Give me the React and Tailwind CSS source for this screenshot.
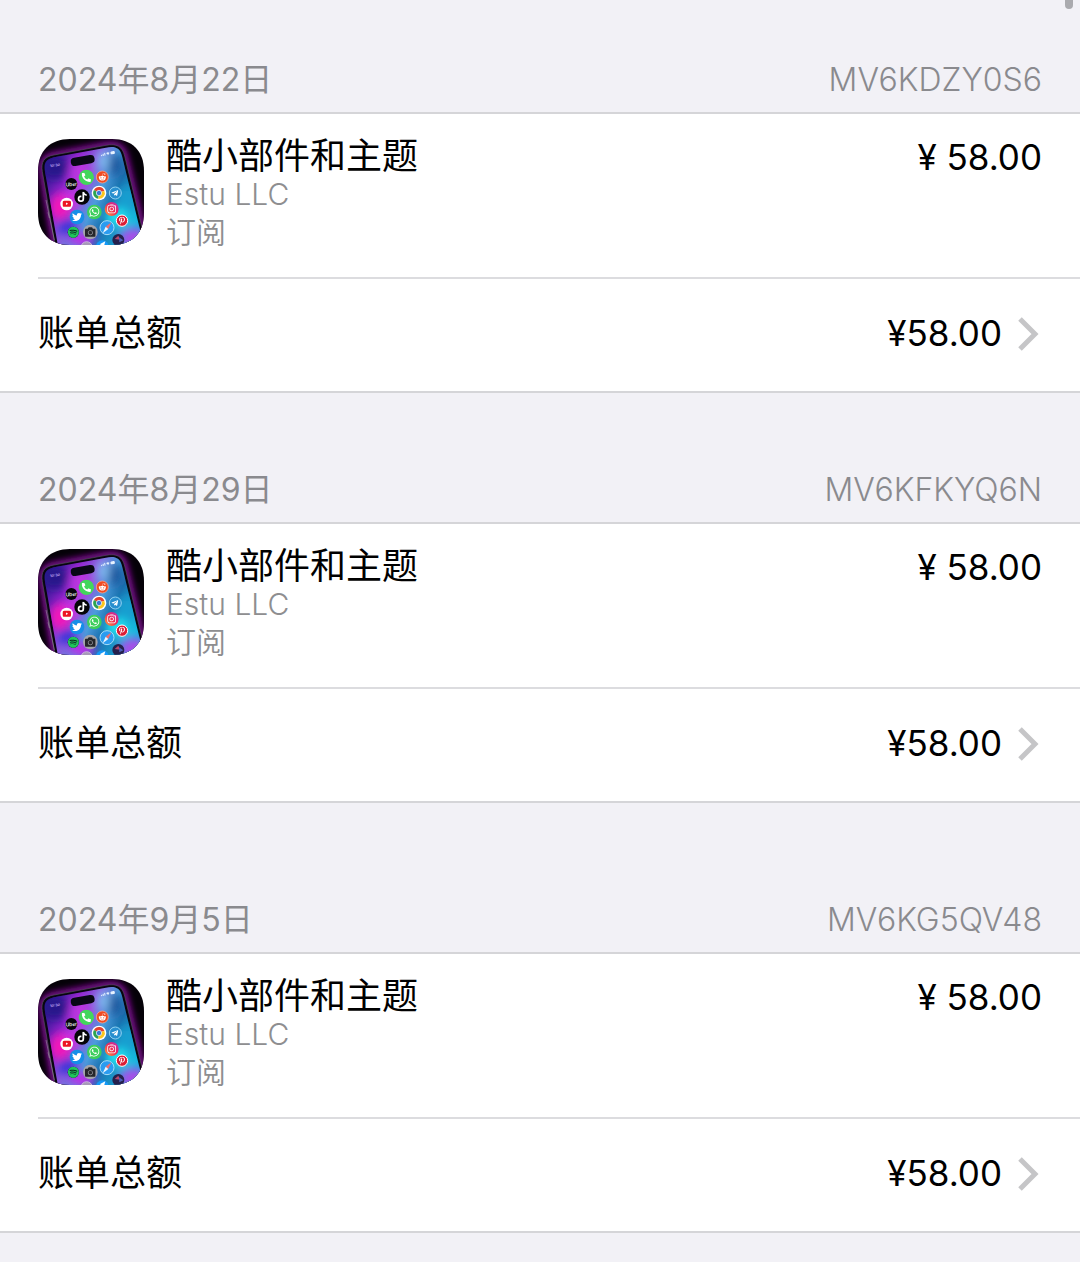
import {
  FaCamera,
  FaInstagram,
  FaPhoneAlt,
  FaPinterestP,
  FaRedditAlien,
  FaSpotify,
  FaTelegramPlane,
  FaTiktok,
  FaTwitter,
  FaWhatsapp,
  FaYoutube,
} from 'react-icons/fa';

// Purchase history, oldest first
const bills = [
  {
    id: 'MV6KDZY0S6',
    date: '2024年8月22日',
    headerHeight: 'h-[114px]',
    title: '酷小部件和主题',
    seller: 'Estu LLC',
    kind: '订阅',
    price: '58.00',
  },
  {
    id: 'MV6KFKYQ6N',
    date: '2024年8月29日',
    headerHeight: 'h-[131px]',
    title: '酷小部件和主题',
    seller: 'Estu LLC',
    kind: '订阅',
    price: '58.00',
  },
  {
    id: 'MV6KG5QV48',
    date: '2024年9月5日',
    headerHeight: 'h-[151px]',
    title: '酷小部件和主题',
    seller: 'Estu LLC',
    kind: '订阅',
    price: '58.00',
  },
];

const AppIcon = ({ id }) => (
  <svg className="mt-0.5 size-[106px] shrink-0" viewBox="24 27 318 318" aria-hidden="true">
    <defs>
      <clipPath id={`${id}-mask`}>
        <path d="M120 27H246C306 27 342 63 342 123V249C342 309 306 345 246 345H120C60 345 24 309 24 249V123C24 63 60 27 120 27Z" />
      </clipPath>
      <clipPath id={`${id}-screen`}>
        <path d="M86 360L45 125C40 100 48 88 72 82L228 53C256 48 270 54 276 78L345 360Z" />
      </clipPath>
      <linearGradient id={`${id}-wall`} x1="45" y1="110" x2="330" y2="240" gradientUnits="userSpaceOnUse">
        <stop offset="0" stopColor="#2a1790" />
        <stop offset="0.25" stopColor="#8a24cc" />
        <stop offset="0.42" stopColor="#8a5cde" />
        <stop offset="0.58" stopColor="#4a9cdc" />
        <stop offset="0.72" stopColor="#1c6fae" />
        <stop offset="1" stopColor="#12b4dc" />
      </linearGradient>
      <linearGradient id={`${id}-insta`} x1="0" y1="1" x2="1" y2="0">
        <stop offset="0" stopColor="#fda835" />
        <stop offset="0.5" stopColor="#ee2b57" />
        <stop offset="1" stopColor="#b82bc0" />
      </linearGradient>
      <filter id={`${id}-glow`} x="-50%" y="-50%" width="200%" height="200%">
        <feGaussianBlur stdDeviation="14" />
      </filter>
      <filter id={`${id}-rim`} x="-20%" y="-20%" width="140%" height="140%">
        <feGaussianBlur stdDeviation="10" />
      </filter>
    </defs>
    <g clipPath={`url(#${id}-mask)`}>
      <rect x="24" y="27" width="318" height="318" fill="#050108" />
      <path
        d="M78 360L38 125C33 95 45 82 72 76L228 46C260 40 276 50 284 78L352 360Z"
        fill="none"
        stroke="#8a0fa0"
        strokeWidth="20"
        filter={`url(#${id}-rim)`}
      />
      <path
        d="M78 360L37 125C32 95 43 80 72 75L228 46C260 40 277 49 284 78L352 360Z"
        fill="#08060f"
        stroke="#55505f"
        strokeWidth="2"
      />

      {/* Wallpaper */}
      <g clipPath={`url(#${id}-screen)`}>
        <rect x="24" y="27" width="330" height="330" fill={`url(#${id}-wall)`} />
        <g filter={`url(#${id}-glow)`}>
          <ellipse cx="75" cy="112" rx="42" ry="36" fill="#26148a" />
          <ellipse cx="150" cy="130" rx="32" ry="46" fill="#bc35e0" />
          <ellipse cx="92" cy="230" rx="32" ry="42" fill="#f412b8" />
          <ellipse cx="125" cy="205" rx="26" ry="26" fill="#d02be0" />
          <ellipse cx="255" cy="105" rx="24" ry="34" fill="#17559c" />
          <ellipse cx="220" cy="92" rx="18" ry="30" fill="#80bcf0" />
          <ellipse cx="290" cy="205" rx="30" ry="36" fill="#149fd0" />
          <ellipse cx="262" cy="262" rx="38" ry="28" fill="#20e0ee" />
          <ellipse cx="112" cy="290" rx="28" ry="28" fill="#3434d8" />
          <ellipse cx="155" cy="328" rx="40" ry="22" fill="#c22be8" />
          <ellipse cx="310" cy="325" rx="42" ry="32" fill="#a84de8" />
        </g>
      </g>
      <path d="M48 210L73 330M54 247L58 264" stroke="#8f8a96" strokeWidth="2" />

      {/* Status bar */}
      <rect x="122" y="79" width="72" height="25" rx="12" fill="#080714" transform="rotate(-10 158 91)" />
      <text x="61" y="112" fontSize="11" fontFamily="Inter, sans-serif" fontWeight="600" fill="#cdbcff" transform="rotate(-8 61 112)">
        10:30
      </text>
      <g transform="rotate(-10 234 72)" fill="#e7f2ff">
        <path d="M213 75h3v-4h-3zM218 75h3v-6h-3zM223 75h3v-8h-3z" />
        <path d="M229 69Q234 64 239 69L234 75Z" />
        <rect x="242" y="66" width="13" height="9" rx="3" />
      </g>

      <circle cx="124" cy="162" r="18" fill="#08060d" />
      <text x="124" y="168" fontSize="15" fontFamily="Inter, sans-serif" fontWeight="500" fill="#fff" textAnchor="middle" transform="rotate(-5 124 162)">
        Uber
      </text>

      <circle cx="169" cy="142" r="23" fill="#43d65c" />
      <FaPhoneAlt x="155" y="128" size={28} color="#fff" />

      <circle cx="217" cy="141" r="18" fill="#f04b22" stroke="#ffb297" strokeWidth="2" />
      <FaRedditAlien x="205" y="129" size={24} color="#fff" />

      <circle cx="156" cy="201" r="23" fill="#050507" />
      <FaTiktok x="141" y="185" size={31} color="#fff" />

      {/* Chrome */}
      <circle cx="207" cy="189" r="22" fill="#fff" />
      <path d="M207 189L192 180A17 17 0 0 1 223 182Z" fill="#e2402f" />
      <path d="M207 189L192 180A17 17 0 0 0 205 206Z" fill="#2da451" />
      <path d="M207 189L223 182A17 17 0 0 1 205 206Z" fill="#fbc51d" />
      <circle cx="207" cy="189" r="8" fill="#3c79d8" stroke="#fff" strokeWidth="2" />

      <circle cx="256" cy="189" r="18" fill="#278fcf" stroke="#91d3f2" strokeWidth="3" />
      <FaTelegramPlane x="243" y="178" size={23} color="#fff" />

      <circle cx="110" cy="222" r="19" fill="#fff" />
      <FaYoutube x="97" y="208" size={27} color="#ec1525" />

      <circle cx="141" cy="261" r="22" fill="#168ee8" />
      <FaTwitter x="126" y="246" size={30} color="#fff" />

      <circle cx="193" cy="246" r="22" fill="#3cce5c" />
      <FaWhatsapp x="176" y="228" size={34} color="#fff" />

      <circle cx="245" cy="237" r="21" fill={`url(#${id}-insta)`} />
      <FaInstagram x="230" y="222" size={30} color="#fff" />

      <circle cx="276" cy="272" r="17" fill="#dc1d35" stroke="#fff" strokeWidth="3" />
      <FaPinterestP x="264" y="260" size={24} color="#fff" />

      {/* Spotify */}
      <circle cx="130" cy="307" r="17" fill="#0b2b20" />
      <FaSpotify x="113" y="290" size={34} color="#20c55a" />

      <circle cx="181" cy="306" r="22" fill="#a4a5ab" />
      <FaCamera x="165" y="290" size={32} color="#25262a" />

      {/* Safari */}
      <circle cx="231" cy="293" r="21" fill="#2b9cf0" stroke="#a6dcf8" strokeWidth="3" />
      <path d="M244 277L235 297L227 290Z" fill="#f26d6b" />
      <path d="M218 310L235 297L227 290Z" fill="#eef6ff" />

      <circle cx="265" cy="330" r="18" fill="#25204d" />
      <path d="M254 327L265 317L270 329Z" fill="#b8476c" />
      <path d="M267 322L280 331L268 337Z" fill="#4c5fb8" />
      <circle cx="170" cy="352" r="17" fill="#a79ab8" stroke="#ded5e8" strokeWidth="2" />
      <circle cx="217" cy="350" r="19" fill="#1598f5" />
      <path d="M209 343L226 334L222 348Z" fill="#fff" />
    </g>
  </svg>
);

const BillHeader = ({ date, number, height }) => (
  <header
    className={`flex items-end justify-between border-b-2 border-[#d5d5d8] px-[38px] pb-3 text-[32px] leading-10 text-[#8a8a8e] ${height}`}
  >
    <h2>{date}</h2>
    <span className="font-light">{number}</span>
  </header>
);

const Bill = ({ bill }) => (
  <section>
    <BillHeader date={bill.date} number={bill.id} height={bill.headerHeight} />
    <div className="border-b-2 border-[#d5d5d8] bg-white pl-[38px]">
      <div className="flex items-start border-b-2 border-[#dcdcdf] pt-[23px] pr-[38px] pb-[26px]">
        <AppIcon id={bill.id} />
        <div className="ml-[22px] min-w-0 flex-1 text-[30px] leading-[38px] text-[#8e8e90]">
          <h3 className="text-[36px] leading-[38px] text-black">{bill.title}</h3>
          <p className="font-[350]">{bill.seller}</p>
          <p className="font-[350]">{bill.kind}</p>
        </div>
        <p className="text-[35px] leading-10">¥ {bill.price}</p>
      </div>
      <a href={`#${bill.id}`} className="flex h-28 items-center pr-[38px] pb-1">
        <span className="flex-1 text-[36px] leading-[44px]">账单总额</span>
        <span className="text-[35px] leading-[44px]">¥{bill.price}</span>
        <svg className="ml-4 h-9 w-6" viewBox="0 0 24 36" fill="none" aria-hidden="true">
          <path d="M2 4L17 19L2 34" stroke="#c5c5c7" strokeWidth="5" />
        </svg>
      </a>
    </div>
  </section>
);

export default function App() {
  return (
    <main className="relative min-h-screen overflow-hidden bg-[#f2f1f6] pb-7 font-[Inter,'Noto_Sans_CJK_SC',sans-serif] text-black">
      {/* End of the scroll indicator */}
      <div className="absolute top-0 right-[7px] h-[9px] w-2 rounded-b-full bg-[#aaaaae]" />
      {bills.map((bill) => (
        <Bill key={bill.id} bill={bill} />
      ))}
    </main>
  );
}
